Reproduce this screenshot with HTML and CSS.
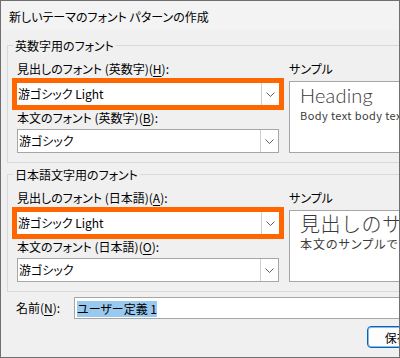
FILE: index.html
```html
<!DOCTYPE html>
<html lang="ja">
<head>
    <meta charset="UTF-8">
    <title>新しいテーマのフォント パターンの作成</title>
    <link rel="stylesheet" href="styles.css">
</head>
<body>
    <div class="dialog">
        <div class="titlebar">新しいテーマのフォント パターンの作成</div>
        <div class="content">
            <div class="group">
                <span class="group-title">英数字用のフォント</span>
                <div class="fields">
                    <div class="label first">見出しのフォント (英数字)(<u>H</u>):</div>
                    <div class="combo hl">
                        <span class="combo-text">游ゴシック Light</span>
                        <span class="drop"><svg width="9" height="5" viewBox="0 0 9 5"><polyline points="0.5,0.5 4.5,4.5 8.5,0.5" fill="none" stroke="#5f5f5f" stroke-width="1"/></svg></span>
                    </div>
                    <div class="label second">本文のフォント (英数字)(<u>B</u>):</div>
                    <div class="combo">
                        <span class="combo-text">游ゴシック</span>
                        <span class="drop"><svg width="9" height="5" viewBox="0 0 9 5"><polyline points="0.5,0.5 4.5,4.5 8.5,0.5" fill="none" stroke="#5f5f5f" stroke-width="1"/></svg></span>
                    </div>
                </div>
                <div class="sample-col">
                    <div class="label sample-label">サンプル</div>
                    <div class="sample">
                        <div class="sample-head">Heading</div>
                        <div class="sample-body">Body text body text body text. Body text body text.</div>
                    </div>
                </div>
            </div>

            <div class="group second-group">
                <span class="group-title">日本語文字用のフォント</span>
                <div class="fields">
                    <div class="label first">見出しのフォント (日本語)(<u>A</u>):</div>
                    <div class="combo hl">
                        <span class="combo-text">游ゴシック Light</span>
                        <span class="drop"><svg width="9" height="5" viewBox="0 0 9 5"><polyline points="0.5,0.5 4.5,4.5 8.5,0.5" fill="none" stroke="#5f5f5f" stroke-width="1"/></svg></span>
                    </div>
                    <div class="label second">本文のフォント (日本語)(<u>O</u>):</div>
                    <div class="combo">
                        <span class="combo-text">游ゴシック</span>
                        <span class="drop"><svg width="9" height="5" viewBox="0 0 9 5"><polyline points="0.5,0.5 4.5,4.5 8.5,0.5" fill="none" stroke="#5f5f5f" stroke-width="1"/></svg></span>
                    </div>
                </div>
                <div class="sample-col">
                    <div class="label sample-label">サンプル</div>
                    <div class="sample">
                        <div class="sample-head jp">見出しのサンプルです</div>
                        <div class="sample-body jp">本文のサンプルです。本文のサンプルです。</div>
                    </div>
                </div>
            </div>

            <div class="name-row">
                <span class="name-label">名前(<u>N</u>):</span>
                <div class="name-field"><span class="selected">ユーザー定義 1</span></div>
            </div>

            <div class="footer">
                <button class="btn default">保存(<u>S</u>)</button>
                <button class="btn">キャンセル</button>
            </div>
        </div>
    </div>
</body>
</html>
```

FILE: styles.css
```css
*{
    margin: 0;
    padding: 0;
    box-sizing: border-box;
}
body{
    background: #f0f0f0;
    font-family: "Noto Sans CJK JP", "Liberation Sans", sans-serif;
    font-size: 12px;
    font-feature-settings: "palt";
    color: #000;
}
.dialog{
    width: 400px;
    height: 358px;
    border: 1px solid #6f6f6f;
    background: #f0f0f0;
    overflow: hidden;
}
.titlebar{
    height: 29px;
    padding: 8px 0 0 8px;
    line-height: 16px;
    background: #f3f3f3;
    white-space: nowrap;
}
.content{
    width: 560px;
    padding-left: 6px;
}
.group{
    position: relative;
    width: 520px;
    margin-top: 15px;
    border: 1px solid #d9d9d9;
    padding: 15px 0 9px 9px;
    display: grid;
    grid-template-columns: 262px 1fr;
    column-gap: 10px;
}
.second-group{
    margin-top: 11px;
}
.group-title{
    position: absolute;
    left: 5px;
    top: -8px;
    padding: 0 2px;
    line-height: 16px;
    background: #f0f0f0;
}
.label{
    line-height: 16px;
    white-space: nowrap;
}
.label.first{
    margin-bottom: 1px;
}
.label.second{
    margin-bottom: 3px;
}
.label.sample-label{
    margin-bottom: 4px;
}
u{
    text-decoration-thickness: 1px;
    text-underline-offset: 2px;
}
.combo{
    height: 24px;
    display: flex;
    background: #fff;
    border: 1px solid #a6a6a6;
}
.combo.hl{
    height: 32px;
    margin: 0 -5px;
    border: 5px solid #ff6600;
}
.combo-text{
    flex: 1;
    padding-left: 1px;
    line-height: 22px;
    white-space: nowrap;
}
.drop{
    width: 18px;
    border-left: 1px solid #cfcfcf;
    display: flex;
    align-items: center;
    justify-content: center;
}
.sample{
    height: 72px;
    background: #fff;
    border: 1px solid #a6a6a6;
    padding: 2px 0 0 10px;
    overflow: hidden;
    white-space: nowrap;
    color: #3a3a3a;
}
.sample-head{
    font-family: Lato, "Noto Sans CJK JP", sans-serif;
    font-size: 20px;
    line-height: 22px;
    font-weight: 300;
    letter-spacing: 0.2px;
}
.sample-head.jp{
    font-family: "Noto Sans CJK JP", sans-serif;
    font-feature-settings: normal;
    letter-spacing: 0.5px;
}
.sample-body{
    margin-top: 1px;
    font-size: 11px;
    line-height: 16px;
    letter-spacing: 0.4px;
}
.sample-body.jp{
    font-size: 12px;
    letter-spacing: 1px;
}
.name-row{
    margin-top: 5px;
    padding-left: 9px;
    display: flex;
    align-items: center;
}
.name-label{
    width: 58px;
    line-height: 16px;
}
.name-field{
    width: 420px;
    height: 22px;
    background: #fff;
    border: 1px solid #a6a6a6;
    padding: 2px 0 0 2px;
}
.selected{
    display: inline-block;
    line-height: 16px;
    background: #99c9ef;
}
.footer{
    width: 518px;
    margin-top: 7px;
    display: flex;
    justify-content: flex-end;
    gap: 8px;
}
.btn{
    width: 75px;
    height: 22px;
    font: inherit;
    font-size: 12px;
    background: #fdfdfd;
    border: 1px solid #c4c4c4;
    border-radius: 4px;
}
.btn.default{
    border-color: #0067c0;
    box-shadow: inset 0 0 0 1px rgba(0, 103, 192, 0.45);
}
```
